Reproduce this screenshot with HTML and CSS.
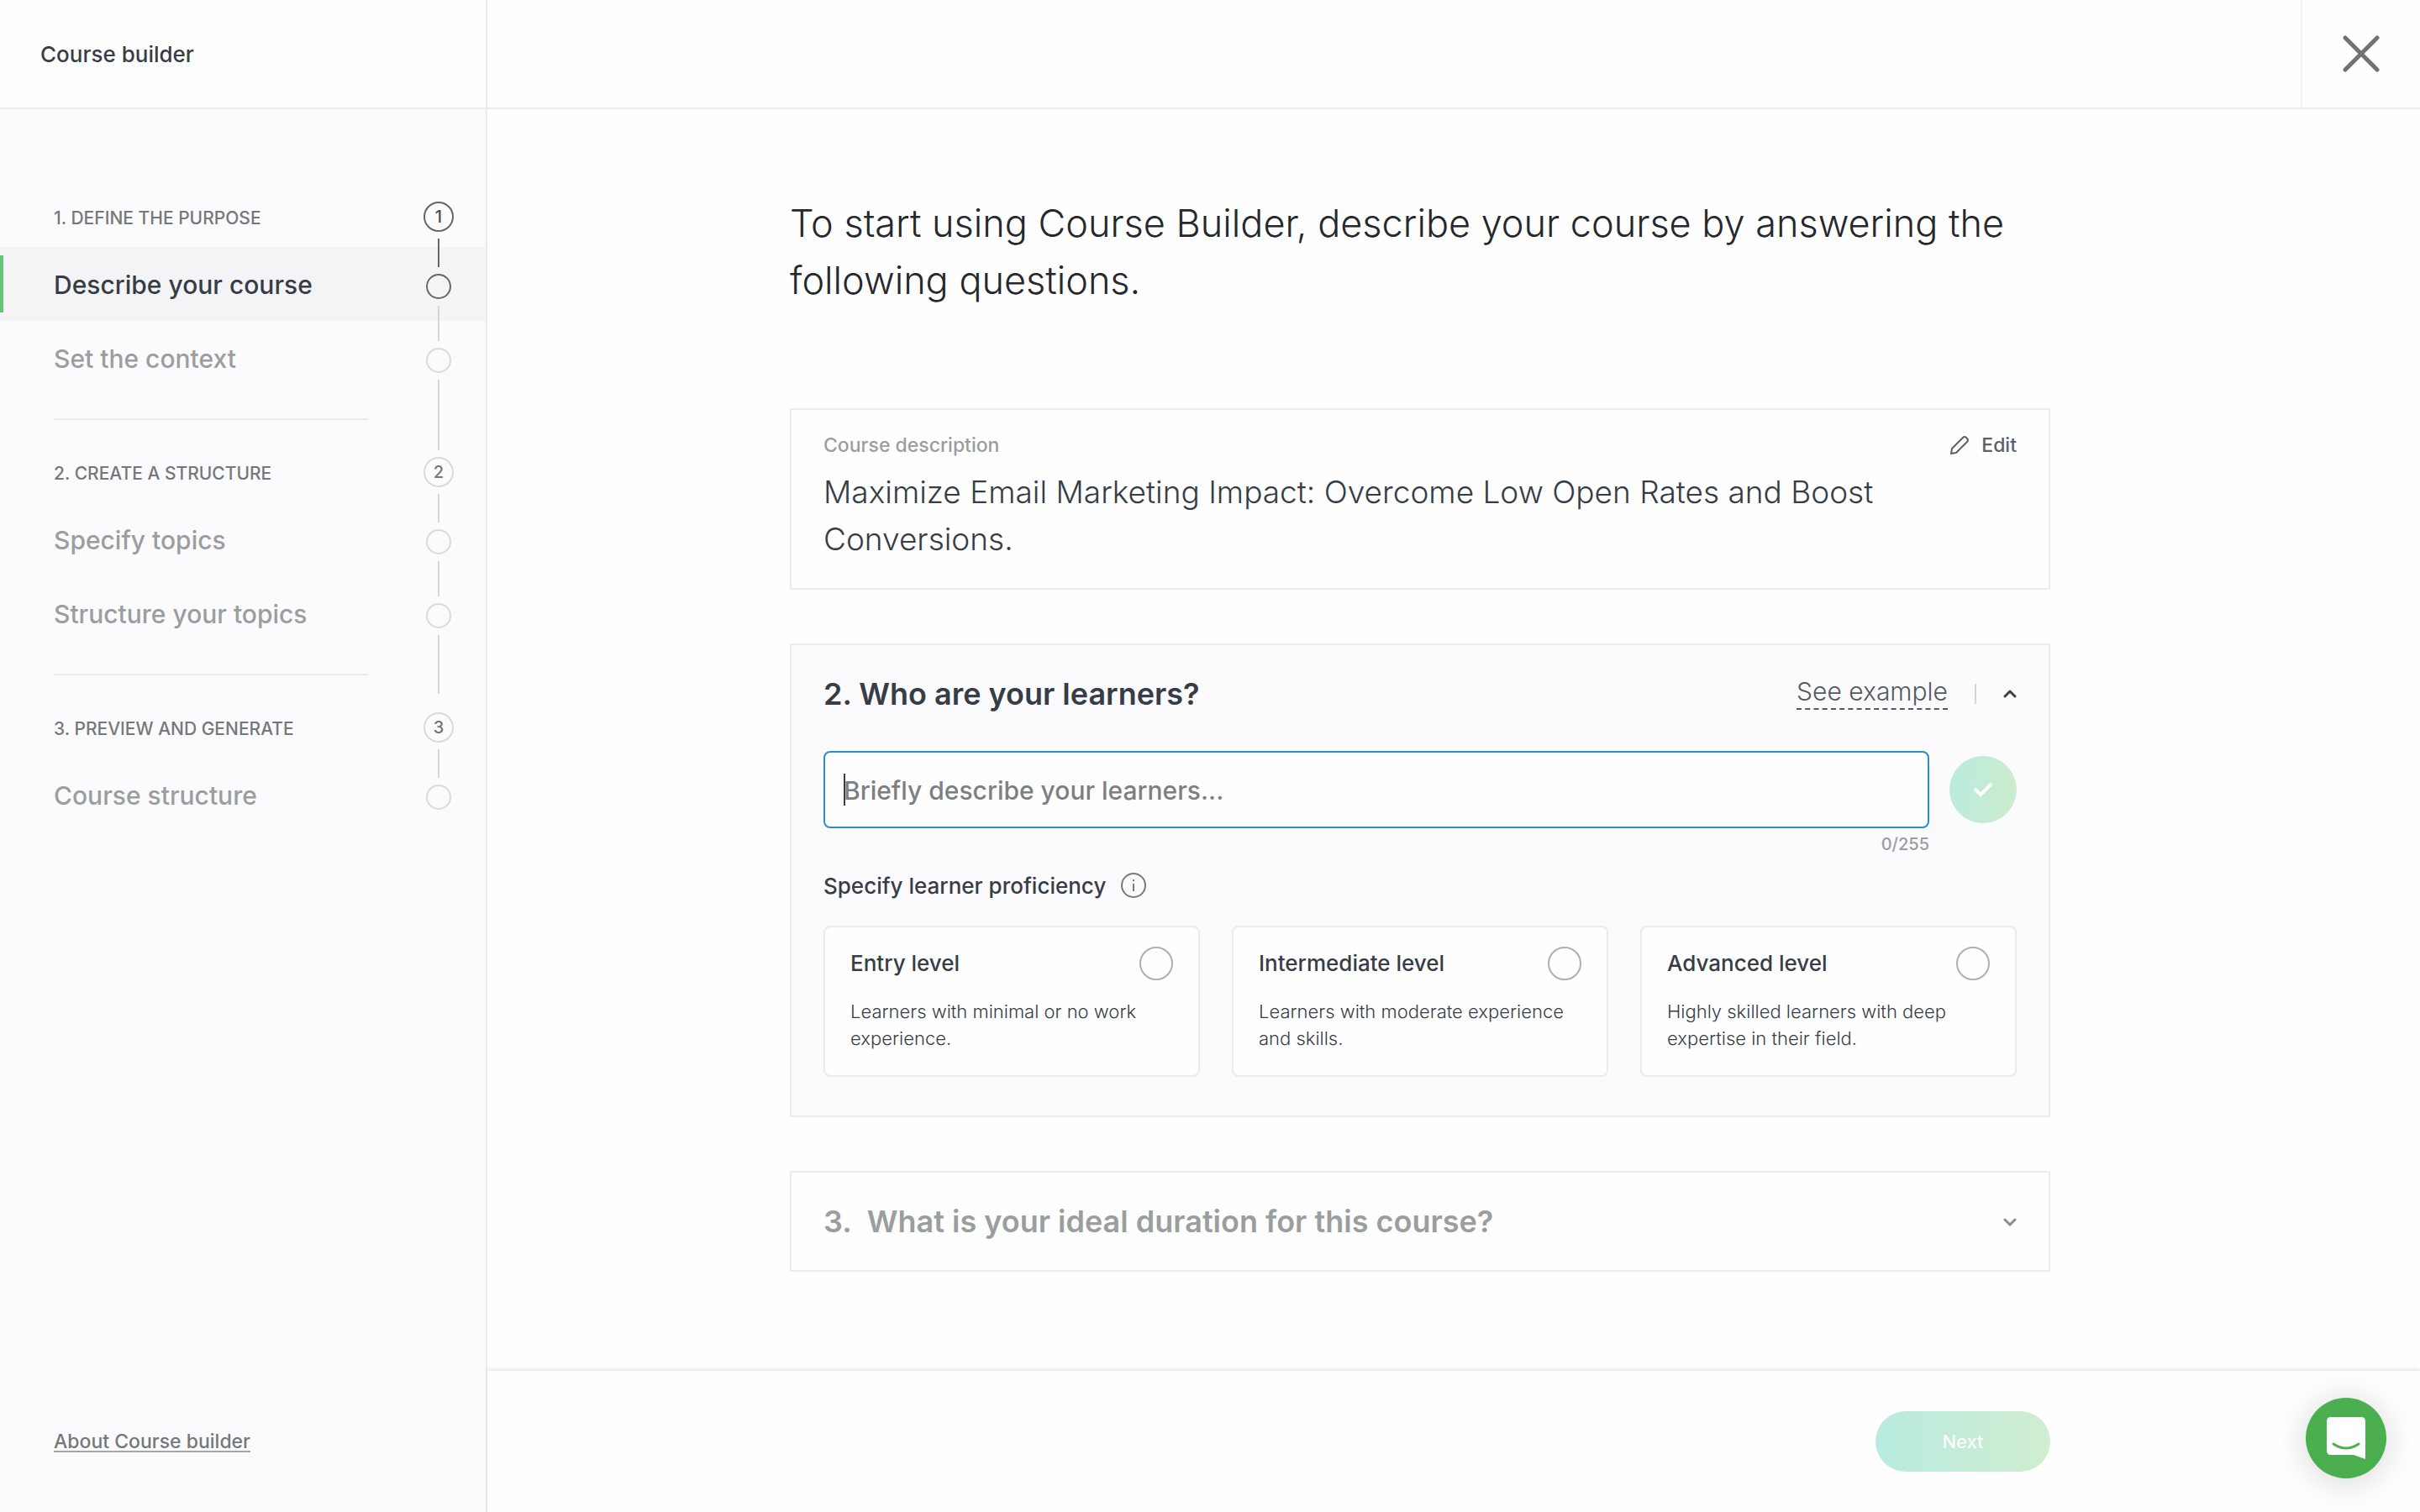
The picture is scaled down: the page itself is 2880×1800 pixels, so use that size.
FILE: index.html
```html
<!DOCTYPE html>
<html lang="en">
<head>
    <title>Course builder</title>
    <meta charset="utf-8">
    <meta name="viewport" content="width=device-width, initial-scale=1">
    <link rel="stylesheet" href="styles.css">
</head>
<body>
    <aside class="sidebar">
        <div class="sidebar-header">Course builder</div>

        <nav class="steps">
            <div class="step-list">
                <section class="step-group">
                    <h2>1. DEFINE THE PURPOSE</h2>
                    <a class="step active" href="#describe">Describe your course</a>
                    <a class="step" href="#context">Set the context</a>
                </section>
                <section class="step-group">
                    <h2>2. CREATE A STRUCTURE</h2>
                    <a class="step" href="#topics">Specify topics</a>
                    <a class="step" href="#structure">Structure your topics</a>
                </section>
                <section class="step-group">
                    <h2>3. PREVIEW AND GENERATE</h2>
                    <a class="step" href="#preview">Course structure</a>
                </section>
            </div>

            <!-- progress track -->
            <div class="track">
                <span class="number current">1</span>
                <span class="line current"></span>
                <span class="dot current"></span>
                <span class="line medium"></span>
                <span class="dot"></span>
                <span class="line long"></span>
                <span class="number">2</span>
                <span class="line"></span>
                <span class="dot"></span>
                <span class="line medium"></span>
                <span class="dot"></span>
                <span class="line last"></span>
                <span class="number">3</span>
                <span class="line"></span>
                <span class="dot"></span>
            </div>
        </nav>

        <a class="about" href="#about">About Course builder</a>
    </aside>

    <div class="page">
        <header class="topbar">
            <button class="close" type="button" aria-label="Close">
                <svg width="44" height="44" viewBox="0 0 44 44" fill="none" stroke="#6f7275" stroke-width="5" stroke-linecap="round">
                    <path d="M3 3l38 38M41 3L3 41"/>
                </svg>
            </button>
        </header>

        <main class="content">
            <h1>To start using Course Builder, describe your course by answering the following questions.</h1>

            <section class="card description">
                <div class="card-top">
                    <span class="label">Course description</span>
                    <button class="edit" type="button">
                        <svg width="24" height="24" viewBox="0 0 24 24" fill="none" stroke="#5d6165" stroke-width="2" stroke-linejoin="round">
                            <path d="M2 22l1-6L16 3q2-2 4 0l1 1q2 2 0 4L8 21z"/>
                        </svg>
                        Edit
                    </button>
                </div>
                <p class="answer">Maximize Email Marketing Impact: Overcome Low Open Rates and Boost Conversions.</p>
            </section>

            <section class="card learners">
                <div class="question">
                    <h3><label for="learners">2. Who are your learners?</label></h3>
                    <a class="example" href="#example">See example</a>
                    <span class="separator"></span>
                    <button class="toggle" type="button" aria-label="Collapse">
                        <svg width="16" height="16" viewBox="0 0 16 16" fill="none" stroke="#3c4045" stroke-width="3" stroke-linecap="round" stroke-linejoin="round">
                            <path d="M2 11l6-6 6 6"/>
                        </svg>
                    </button>
                </div>

                <div class="answer-row">
                    <div class="field">
                        <input id="learners" type="text" maxlength="255" placeholder="Briefly describe your learners...">
                        <span class="caret"></span>
                    </div>
                    <button class="confirm" type="button" aria-label="Confirm" disabled>
                        <svg width="24" height="20" viewBox="0 0 24 20" fill="none" stroke="#fff" stroke-width="4">
                            <path d="M2 9l7 7L22 3"/>
                        </svg>
                    </button>
                    <span class="counter">0/255</span>
                </div>

                <div class="proficiency" id="proficiency">
                    Specify learner proficiency
                    <svg width="30" height="30" viewBox="0 0 30 30" fill="none" stroke="#777a7d" stroke-width="2">
                        <circle cx="15" cy="15" r="14"/>
                        <path d="M15 13v9M15 8v2"/>
                    </svg>
                </div>

                <div class="levels" role="radiogroup" aria-labelledby="proficiency">
                    <label class="level">
                        <span class="level-name">Entry level</span>
                        <input type="radio" name="level">
                        <span class="level-text">Learners with minimal or no work experience.</span>
                    </label>
                    <label class="level">
                        <span class="level-name">Intermediate level</span>
                        <input type="radio" name="level">
                        <span class="level-text">Learners with moderate experience and skills.</span>
                    </label>
                    <label class="level">
                        <span class="level-name">Advanced level</span>
                        <input type="radio" name="level">
                        <span class="level-text">Highly skilled learners with deep expertise in their field.</span>
                    </label>
                </div>
            </section>

            <section class="card duration">
                <div class="question">
                    <h3>3.&nbsp; What is your ideal duration for this course?</h3>
                    <button class="toggle" type="button" aria-label="Expand">
                        <svg width="16" height="16" viewBox="0 0 16 16" fill="none" stroke="#8a8d90" stroke-width="3" stroke-linecap="round" stroke-linejoin="round">
                            <path d="M2 6l6 6 6-6"/>
                        </svg>
                    </button>
                </div>
            </section>
        </main>

        <footer class="footer">
            <button class="next" type="button" disabled>Next</button>
        </footer>
    </div>

    <button class="chat" type="button" aria-label="Open chat">
        <svg width="46" height="50" viewBox="0 0 46 50">
            <path d="M5 0h36q5 0 5 5v45l-14-5H5q-5 0-5-5V5q0-5 5-5z" fill="#fff"/>
            <path d="M8 32q15 10 30 0" fill="none" stroke="#4caf4f" stroke-width="3" stroke-linecap="round"/>
        </svg>
    </button>
</body>
</html>
```
FILE: styles.css
```css
* {
    box-sizing: border-box;
}
body {
    font-family: Inter, "Liberation Sans", sans-serif;
    margin: 0;
    min-height: 100vh;
    display: flex;
    background: #fefefe;
    color: #373d47;
}
h1, h2, h3, p {
    margin: 0;
}
button {
    font-family: inherit;
    border: none;
    padding: 0;
    background: none;
    cursor: pointer;
}
svg {
    display: block;
}

/* sidebar */
.sidebar {
    width: 580px;
    flex-shrink: 0;
    display: flex;
    flex-direction: column;
    background: #fbfbfd;
    border-right: 2px solid #ebebec;
}
.sidebar-header {
    height: 130px;
    padding-left: 48px;
    display: flex;
    align-items: center;
    background: #fefefe;
    border-bottom: 2px solid #ebebec;
    font-size: 26px;
    font-weight: 500;
}
.steps {
    display: grid;
    margin-top: 96px;
}
.step-list, .track {
    grid-area: 1 / 1;
}
.step-group h2 {
    height: 68px;
    line-height: 68px;
    padding-left: 64px;
    font-size: 21px;
    font-weight: 500;
    color: #74787b;
}
.step-group:not(:last-child)::after {
    content: "";
    display: block;
    width: 374px;
    height: 2px;
    margin: 28px 0 30px 64px;
    background: #ebebec;
}
.step {
    display: flex;
    align-items: center;
    height: 88px;
    padding: 2px 0 0 64px;
    font-size: 30px;
    font-weight: 500;
    color: #9a9e9f;
    text-decoration: none;
}
.step.active {
    color: #373d47;
    background: linear-gradient(#65c476, #65c476) left center / 4px 68px no-repeat #f4f4f6;
}
.track {
    justify-self: end;
    width: 36px;
    margin: 14px 38px 0 0;
    display: flex;
    flex-direction: column;
    align-items: center;
    gap: 8px;
}
.number, .dot {
    border: 2px solid #d9dadc;
    border-radius: 50%;
}
.number {
    width: 36px;
    height: 36px;
    line-height: 32px;
    text-align: center;
    font-size: 20px;
    font-weight: 500;
    color: #74787b;
}
.dot {
    width: 30px;
    height: 30px;
}
.line {
    width: 2px;
    height: 34px;
    background: #d5d6d8;
}
.line.medium {
    height: 42px;
}
.line.long {
    height: 84px;
}
.line.last {
    height: 70px;
    margin-bottom: 14px;
}
.number.current, .dot.current {
    border-color: #63676b;
    color: #4b4f54;
}
.line.current {
    background: #63676b;
}
.about {
    margin: auto auto 68px 64px;
    line-height: 32px;
    font-size: 23px;
    font-weight: 500;
    color: #74787b;
    text-decoration-color: #a3a6a8;
    text-decoration-thickness: 2px;
    text-underline-offset: 3px;
}

/* main column */
.page {
    flex: 1;
    display: flex;
    flex-direction: column;
}
.topbar {
    height: 130px;
    display: flex;
    justify-content: flex-end;
    border-bottom: 2px solid #ebebec;
}
.close {
    width: 142px;
    display: grid;
    place-items: center;
    border-left: 2px solid #f3f3f4;
}
.content {
    flex: 1;
    width: 100%;
    max-width: 1580px;
    margin: 0 auto;
    padding: 102px 80px 40px 0;
}
h1 {
    margin-bottom: 118px;
    font-size: 45px;
    line-height: 68px;
    font-weight: 300;
    color: #25282c;
}
.card {
    padding: 0 38px;
    border: 2px solid #ebebec;
    margin-bottom: 64px;
}
.card:last-child {
    margin-bottom: 0;
}
.description {
    padding-top: 26px;
    padding-bottom: 30px;
}
.card-top {
    display: flex;
    justify-content: space-between;
    align-items: center;
    height: 32px;
    margin-bottom: 12px;
}
.label {
    font-size: 23px;
    font-weight: 500;
    color: #9a9d9f;
}
.edit {
    display: flex;
    align-items: center;
    gap: 14px;
    font-size: 23px;
    font-weight: 500;
    color: #5d6165;
}
.answer {
    font-size: 37px;
    line-height: 56px;
    font-weight: 300;
}
.question {
    display: flex;
    align-items: center;
    height: 116px;
}
h3 {
    flex: 1;
    font-size: 36px;
    font-weight: 600;
}
.example {
    line-height: 40px;
    margin-bottom: 4px;
    border-bottom: 2px dashed #55595e;
    font-size: 30px;
    font-weight: 300;
    color: #55595e;
    text-decoration: none;
}
.separator {
    width: 2px;
    height: 24px;
    margin: 0 32px;
    background: #d5d6d8;
}

.learners {
    padding-bottom: 46px;
    background: #fbfbfd;
}
.answer-row {
    display: grid;
    grid-template-columns: 1fr 80px;
    column-gap: 24px;
    align-items: center;
    padding-top: 10px;
}
.field {
    position: relative;
}
.field input {
    display: block;
    width: 100%;
    height: 92px;
    padding: 2px 22px 0;
    border: 2px solid #2990c8;
    border-radius: 8px;
    background: #fefefe;
    font-family: inherit;
    font-size: 30px;
    font-weight: 500;
    color: #373d47;
    outline: none;
}
.field input::placeholder {
    color: #7c8082;
    opacity: 1;
}
.caret {
    position: absolute;
    left: 24px;
    top: 27px;
    width: 2px;
    height: 38px;
    background: #373d47;
}
.confirm {
    width: 80px;
    height: 80px;
    display: grid;
    place-items: center;
    border-radius: 50%;
    background: linear-gradient(100deg, #b8ebe0, #cdeccb);
}
.counter {
    margin-top: 4px;
    line-height: 30px;
    text-align: right;
    font-size: 20px;
    font-weight: 500;
    color: #9a9d9f;
}
.proficiency {
    display: flex;
    align-items: center;
    gap: 18px;
    height: 40px;
    margin: 14px 0 28px;
    font-size: 26px;
    font-weight: 500;
}
.levels {
    display: grid;
    grid-template-columns: repeat(3, 1fr);
    gap: 38px;
}
.level {
    display: grid;
    grid-template-columns: 1fr 40px;
    align-items: center;
    row-gap: 20px;
    height: 180px;
    padding: 22px 30px 28px;
    border: 2px solid #ebebec;
    border-radius: 8px;
    background: #fefefe;
    cursor: pointer;
}
.level-name {
    font-size: 26px;
    font-weight: 500;
}
.level input {
    appearance: none;
    width: 40px;
    height: 40px;
    margin: 0;
    border: 2px solid #adafb1;
    border-radius: 50%;
}
.level-text {
    grid-column: 1 / -1;
    font-size: 22px;
    line-height: 32px;
    font-weight: 300;
}
.duration {
    color: #9a9e9f;
}

/* footer */
.footer {
    height: 168px;
    display: flex;
    align-items: center;
    justify-content: flex-end;
    padding-right: 440px;
    box-shadow: 0 -3px 4px rgba(0, 0, 0, 0.08);
}
.next {
    width: 208px;
    height: 72px;
    border-radius: 36px;
    background: linear-gradient(90deg, #b8ebe0, #d0edd0);
    font-size: 22px;
    font-weight: 500;
    color: #fafefc;
}
.chat {
    position: fixed;
    right: 40px;
    bottom: 40px;
    width: 96px;
    height: 96px;
    display: grid;
    place-items: center;
    border-radius: 50%;
    background: #4caf4f;
    box-shadow: 0 4px 40px rgba(0, 0, 0, 0.16);
}
```
